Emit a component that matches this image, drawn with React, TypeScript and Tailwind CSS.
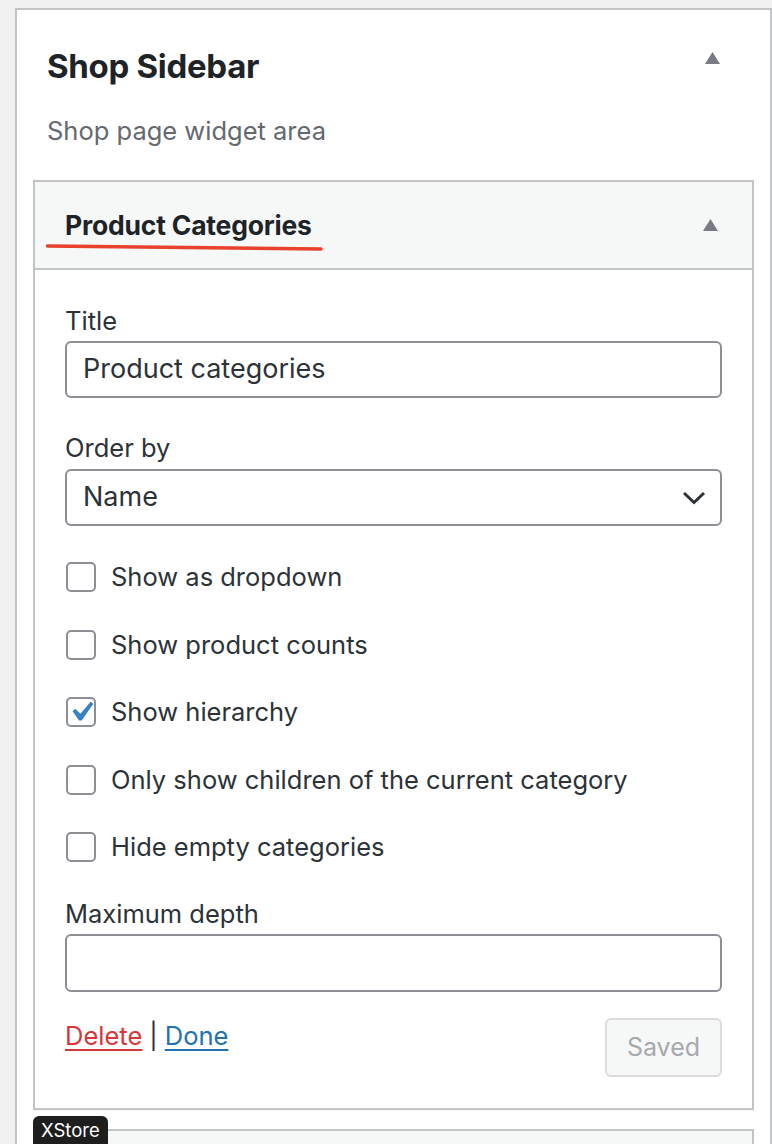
import React from "react";

const font = { fontFamily: 'Inter, "Noto Sans", "Liberation Sans", sans-serif' };

function UpArrow() {
  return (
    <svg width="15" height="12" viewBox="0 0 15 12" className="shrink-0">
      <polygon points="7.5,0 15,12 0,12" fill="#787c82" />
    </svg>
  );
}

function Checkbox({ checked, label }: { checked?: boolean; label: string }) {
  return (
    <label className="flex items-center h-[30px]">
      <span className="relative w-[30px] h-[30px] ml-[1px] border-2 border-[#8c8f94] rounded-[5px] bg-white shrink-0">
        {checked && (
          <svg
            className="absolute left-[-7px] top-[-7px]"
            width="40"
            height="40"
            viewBox="0 0 20 20"
          >
            <path d="M14.83 4.89l1.34.94-5.81 8.38H9.02L5.78 9.67l1.34-1.25 2.57 2.4z" fill="#3582c4" />
          </svg>
        )}
      </span>
      <span className="ml-[15px] text-[25.5px] leading-[30px] text-[#2c3338]">{label}</span>
    </label>
  );
}

export default function App() {
  return (
    <div className="h-[1144px] overflow-hidden bg-[#f0f0f1]" style={font}>
      <div className="ml-[15px] mt-[8px] w-[757px] border-2 border-b-0 border-[#c3c4c7] bg-white px-[16px] pb-10">
        {/* sidebar header */}
        <div className="flex justify-between items-start pl-[14px] pr-[34px] pt-[38px]">
          <h2 className="text-[33px] leading-[36px] font-bold text-[#1d2327] tracking-[-0.3px]">Shop Sidebar</h2>
          <div className="mt-[4px]">
            <UpArrow />
          </div>
        </div>
        <p className="pl-[14px] mt-[32px] text-[25.5px] leading-[30px] text-[#646970]">Shop page widget area</p>

        {/* widget */}
        <div className="mt-[34px] border-2 border-[#c3c4c7] bg-white shadow-[0_1px_1px_rgba(0,0,0,0.04)]">
          <div className="relative h-[88px] flex items-center justify-between pl-[30px] pr-[34px] bg-[#f6f7f7] border-b-2 border-[#c3c4c7]">
            <h3 className="text-[26.5px] leading-[30px] font-bold text-[#1d2327] tracking-[-0.2px]">Product Categories</h3>
            <UpArrow />
            <svg className="absolute left-[10px] top-[61px]" width="280" height="10" viewBox="0 0 280 10">
              <line x1="2.5" y1="3" x2="276" y2="6" stroke="#e8412c" strokeWidth="3.5" strokeLinecap="round" />
            </svg>
          </div>

          <div className="pl-[30px] pr-[30px] pt-[36px] pb-[31px]">
            <div className="text-[25.5px] leading-[30px] text-[#2c3338]">Title</div>
            <div className="mt-[5px] h-[57px] border-2 border-[#8c8f94] rounded-[6px] flex items-center px-[16px] text-[27px] text-[#2c3338]">
              Product categories
            </div>

            <div className="mt-[35px] text-[25.5px] leading-[30px] text-[#2c3338]">Order by</div>
            <div className="mt-[6px] h-[57px] border-2 border-[#8c8f94] rounded-[6px] flex items-center justify-between pl-[16px] pr-[14px] text-[27px] text-[#2c3338]">
              <span>Name</span>
              <svg width="24" height="14" viewBox="0 0 24 14">
                <polyline points="2,2 12,11.5 22,2" fill="none" stroke="#2c3338" strokeWidth="3" />
              </svg>
            </div>

            <div className="mt-[36px] flex flex-col gap-y-[37.5px]">
              <Checkbox label="Show as dropdown" />
              <Checkbox label="Show product counts" />
              <Checkbox checked label="Show hierarchy" />
              <Checkbox label="Only show children of the current category" />
              <Checkbox label="Hide empty categories" />
            </div>

            <div className="mt-[37px] text-[25.5px] leading-[30px] text-[#2c3338]">Maximum depth</div>
            <div className="mt-[5px] h-[58px] border-2 border-[#8c8f94] rounded-[6px]" />

            <div className="mt-[26px] flex justify-between items-start">
              <div className="mt-[3px] text-[25.5px] leading-[30px] text-[#2c3338]">
                <a className="text-[#d63638] underline underline-offset-[4px]">Delete</a>
                <span className="mx-[7px]">|</span>
                <a className="text-[#2271b1] underline underline-offset-[4px]">Done</a>
              </div>
              <button className="w-[117px] h-[59px] border-2 border-[#dcdcde] rounded-[6px] bg-[#f6f7f7] text-[25px] text-[#a7aaad]">
                Saved
              </button>
            </div>
          </div>
        </div>

        {/* next widget */}
        <div className="relative mt-[19px] h-[60px] border-2 border-[#c3c4c7] bg-[#f6f7f7]">
          <div className="absolute left-[-2px] top-[-15px] w-[75px] h-[40px] bg-[#1e1e1e] rounded-t-[6px] px-[8px] pt-[2px] text-white text-[18.5px] leading-[24px]">
            XStore
          </div>
        </div>
      </div>
    </div>
  );
}
